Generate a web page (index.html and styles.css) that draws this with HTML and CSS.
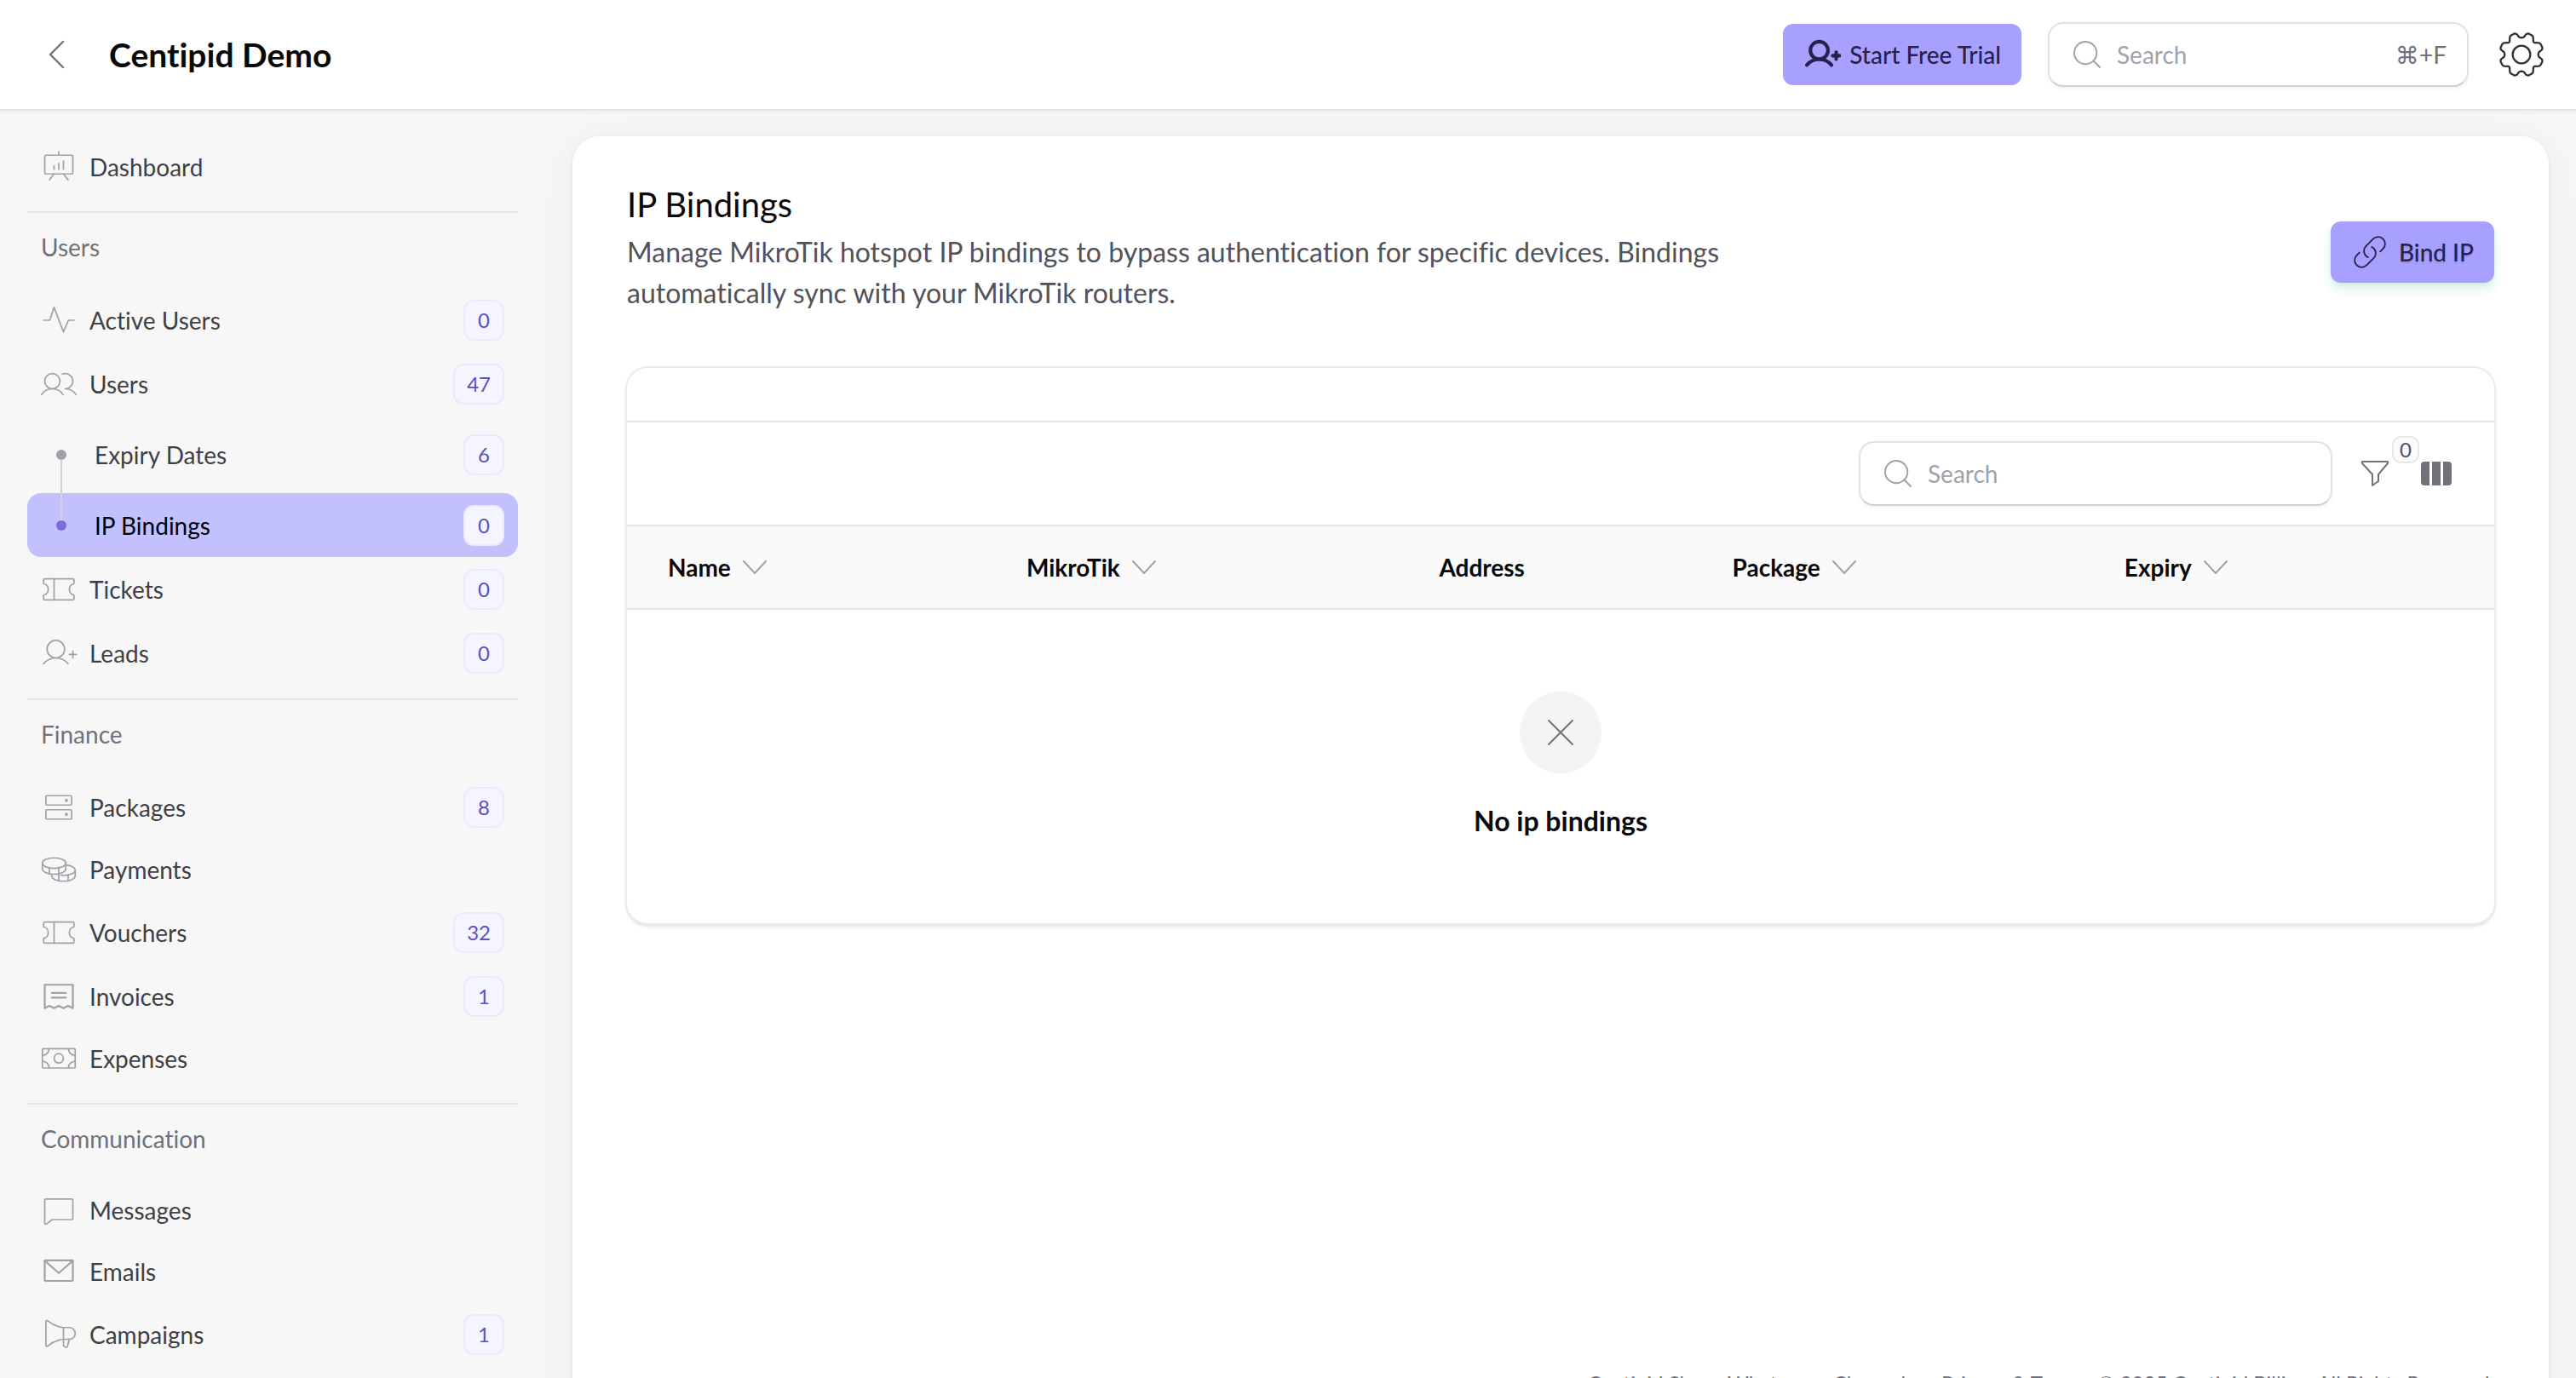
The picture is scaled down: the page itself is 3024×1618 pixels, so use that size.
FILE: index.html
```html
<!DOCTYPE html>
<html lang="en">

<head>
    <meta charset="UTF-8">
    <meta name="viewport" content="width=device-width, initial-scale=1.0">
    <title>IP Bindings - Centipid Demo</title>
    <link rel="stylesheet" href="styles.css">
</head>

<body>
    <!-- shared icons -->
    <svg class="sprite" aria-hidden="true">
        <symbol id="i-ticket" viewBox="0 0 256 256">
            <path d="M96,56V200"/>
            <path d="M24,167.2V192a8,8,0,0,0,8,8H224a8,8,0,0,0,8-8V167.2a40,40,0,0,1,0-78.4V64a8,8,0,0,0-8-8H32a8,8,0,0,0-8,8V88.8a40,40,0,0,1,0,78.4Z"/>
        </symbol>
        <symbol id="i-user-plus" viewBox="0 0 256 256">
            <circle cx="108" cy="100" r="60"/>
            <path d="M24,200c20.55-24.45,49.56-40,84-40s63.45,15.55,84,40M200,136h48M224,112v48"/>
        </symbol>
        <symbol id="i-search" viewBox="0 0 256 256">
            <circle cx="116" cy="116" r="84"/>
            <path d="M175.4,175.4L224,224"/>
        </symbol>
        <symbol id="i-down" viewBox="0 0 28 16">
            <path d="M1,1L14,15L27,1"/>
        </symbol>
    </svg>

    <header class="topbar">
        <button class="back" aria-label="Back">
            <svg class="icon icon-light" viewBox="0 0 256 256"><path d="M160,208L80,128L160,48"/></svg>
        </button>
        <a class="brand" href="#">Centipid Demo</a>
        <div class="topbar-right">
            <button class="btn">
                <svg class="icon icon-bold"><use href="#i-user-plus"/></svg>
                Start Free Trial
            </button>
            <label class="search search-global">
                <svg class="icon icon-light"><use href="#i-search"/></svg>
                <input type="search" placeholder="Search" aria-label="Global search">
                <kbd>⌘+F</kbd>
            </label>
            <button class="gear" aria-label="Settings">
                <svg viewBox="-78 -78 156 156">
                    <circle r="31"/>
                    <path d="M0,-59L8,-61L17,-72L24,-74L39,-66L41,-60L42,-45L45,-42L60,-41L66,-39L74,-24L72,-17L61,-8L59,0L61,8L72,17L74,24L66,39L60,41L45,42L42,45L41,60L39,66L24,74L17,72L8,61L0,59L-8,61L-17,72L-24,74L-39,66L-41,60L-42,45L-45,42L-60,41L-66,39L-74,24L-72,17L-61,8L-59,0L-61,-8L-72,-17L-74,-24L-66,-39L-60,-41L-45,-42L-42,-45L-41,-60L-39,-66L-24,-74L-17,-72L-8,-61Z"/>
                </svg>
            </button>
        </div>
    </header>

    <div class="layout">
        <nav class="sidebar">
            <a class="item" href="#">
                <svg class="icon" viewBox="0 0 256 256"><rect x="32" y="48" width="192" height="128" rx="8"/><path d="M128,48V24M160,176l32,40M96,176L64,216M96,120v24M128,104v40M160,88v56"/></svg>
                <span>Dashboard</span>
            </a>

            <section class="group">
                <h2>Users</h2>
                <a class="item" href="#">
                    <svg class="icon" viewBox="0 0 256 256"><path d="M24,128H66L96,40L160,208L194,128H232"/></svg>
                    <span>Active Users</span><b class="badge">0</b>
                </a>
                <a class="item" href="#">
                    <svg class="icon" viewBox="0 0 256 256"><circle cx="84" cy="108" r="52"/><path d="M10.23,200a88,88,0,0,1,147.54,0M172,160a87.93,87.93,0,0,1,73.77,40M152.69,59.7A52,52,0,1,1,172,160"/></svg>
                    <span>Users</span><b class="badge">47</b>
                </a>
                <div class="subitems">
                    <a class="item" href="#"><i class="dot"></i><span>Expiry Dates</span><b class="badge">6</b></a>
                    <a class="item active" href="#"><i class="dot"></i><span>IP Bindings</span><b class="badge">0</b></a>
                </div>
                <a class="item" href="#">
                    <svg class="icon"><use href="#i-ticket"/></svg>
                    <span>Tickets</span><b class="badge">0</b>
                </a>
                <a class="item" href="#">
                    <svg class="icon"><use href="#i-user-plus"/></svg>
                    <span>Leads</span><b class="badge">0</b>
                </a>
            </section>

            <section class="group">
                <h2>Finance</h2>
                <a class="item" href="#">
                    <svg class="icon" viewBox="0 0 256 256"><rect x="40" y="144" width="176" height="64" rx="8"/><rect x="40" y="48" width="176" height="64" rx="8"/><circle class="fill" cx="180" cy="80" r="6"/><circle class="fill" cx="180" cy="176" r="6"/></svg>
                    <span>Packages</span><b class="badge">8</b>
                </a>
                <a class="item" href="#">
                    <svg class="icon" viewBox="0 0 256 256"><ellipse cx="96" cy="84" rx="80" ry="36"/><path d="M16,84v40c0,19.88,35.82,36,80,36s80-16.12,80-36V84M64,117v40M128,117v40M176,96.7c36.52,3.34,64,17.86,64,35.3v40c0,19.88-35.82,36-80,36s-80-16.12-80-36V159.3M240,132c0,19.88-35.82,36-80,36c-6,0-12-.3-17.5-.9M192,165v40M128,157v48"/></svg>
                    <span>Payments</span>
                </a>
                <a class="item" href="#">
                    <svg class="icon"><use href="#i-ticket"/></svg>
                    <span>Vouchers</span><b class="badge">32</b>
                </a>
                <a class="item" href="#">
                    <svg class="icon icon-light" viewBox="0 0 256 256"><path d="M32,208V48H224V208l-32-16-32,16-32-16L96,208,64,192ZM80,104h96M80,136h96"/></svg>
                    <span>Invoices</span><b class="badge">1</b>
                </a>
                <a class="item" href="#">
                    <svg class="icon" viewBox="0 0 256 256"><rect x="16" y="60" width="224" height="132" rx="6"/><circle cx="128" cy="126" r="32"/><path d="M62,60A46,46,0,0,1,16,106M194,60A46,46,0,0,0,240,106M16,146A46,46,0,0,1,62,192M240,146A46,46,0,0,0,194,192"/></svg>
                    <span>Expenses</span>
                </a>
            </section>

            <section class="group">
                <h2>Communication</h2>
                <a class="item" href="#">
                    <svg class="icon" viewBox="0 0 256 256"><path d="M40,52H216a8,8,0,0,1,8,8V184a8,8,0,0,1-8,8H83L45,222A8,8,0,0,1,32,216V60a8,8,0,0,1,8-8Z"/></svg>
                    <span>Messages</span>
                </a>
                <a class="item" href="#">
                    <svg class="icon icon-light" viewBox="0 0 256 256"><rect x="32" y="52" width="192" height="140" rx="6"/><path d="M224,54L128,138L32,54"/></svg>
                    <span>Emails</span>
                </a>
                <a class="item" href="#">
                    <svg class="icon" viewBox="0 0 256 256"><path d="M160,80V200.67a8,8,0,0,0,3.56,6.65l11,7.33a8,8,0,0,0,12.2-4.72L200,160M40,200a8,8,0,0,0,13.15,6.12C105.55,162.16,160,160,160,160h40a40,40,0,0,0,0-80H160S105.55,77.84,53.15,33.89A8,8,0,0,0,40,40Z"/></svg>
                    <span>Campaigns</span><b class="badge">1</b>
                </a>
            </section>
        </nav>

        <main class="panel">
            <div class="page-head">
                <div>
                    <h1>IP Bindings</h1>
                    <p>Manage MikroTik hotspot IP bindings to bypass authentication for specific devices. Bindings automatically sync with your MikroTik routers.</p>
                </div>
                <button class="btn btn-bind">
                    <svg class="icon" viewBox="0 0 24 24"><path d="M13.19 8.688a4.5 4.5 0 0 1 1.242 7.244l-4.5 4.5a4.5 4.5 0 0 1-6.364-6.364l1.757-1.757m13.35-.622 1.757-1.757a4.5 4.5 0 0 0-6.364-6.364l-4.5 4.5a4.5 4.5 0 0 0 1.242 7.244"/></svg>
                    Bind IP
                </button>
            </div>

            <div class="card">
                <div class="card-head"></div>
                <div class="toolbar">
                    <label class="search search-table">
                        <svg class="icon icon-light"><use href="#i-search"/></svg>
                        <input type="search" placeholder="Search" aria-label="Search table">
                    </label>
                    <button class="tool filter" aria-label="Filter">
                        <svg viewBox="0 0 32 32"><path d="M1,2H31V4L20,17V25L13,30V17L1,4Z"/></svg>
                        <span class="count">0</span>
                    </button>
                    <button class="tool columns" aria-label="Columns">
                        <svg viewBox="0 0 36 28"><path d="M4,0H10V28H4a4,4,0,0,1-4-4V4a4,4,0,0,1,4-4ZM13,0H23V28H13ZM26,0H32a4,4,0,0,1,4,4V24a4,4,0,0,1-4,4H26Z"/></svg>
                    </button>
                </div>
                <table>
                    <colgroup>
                        <col class="c-name"><col class="c-mikrotik"><col class="c-address"><col class="c-package"><col>
                    </colgroup>
                    <thead>
                        <tr>
                            <th><button>Name <svg><use href="#i-down"/></svg></button></th>
                            <th><button>MikroTik <svg><use href="#i-down"/></svg></button></th>
                            <th>Address</th>
                            <th><button>Package <svg><use href="#i-down"/></svg></button></th>
                            <th><button>Expiry <svg><use href="#i-down"/></svg></button></th>
                        </tr>
                    </thead>
                </table>
                <div class="empty">
                    <div class="empty-icon">
                        <svg viewBox="0 0 32 32"><path d="M2,2L30,30M30,2L2,30"/></svg>
                    </div>
                    <h3>No ip bindings</h3>
                </div>
            </div>

            <footer>
                <a href="#">Centipid Shop</a>
                <a href="#">Whatsapp</a>
                <a href="#">Changelog</a>
                <a href="#">Privacy &amp; Terms</a>
                <span>© 2025 Centipid Billing. All Rights Reserved.</span>
            </footer>
        </main>
    </div>
</body>

</html>
```
FILE: styles.css
```css
* {
    box-sizing: border-box;
}

body {
    font-family: Lato, "DejaVu Sans", sans-serif;
    font-size: 28px;
    line-height: 40px;
    font-variant-ligatures: none;
    color: #09090b;
    background-color: #f7f7f7;
    margin: 0;
    height: 100vh;
    display: flex;
    flex-direction: column;
    overflow: hidden;
}

a {
    color: inherit;
    text-decoration: none;
}

button,
input,
kbd {
    font: inherit;
    color: inherit;
    background: none;
    border: 0;
    padding: 0;
}

button {
    cursor: pointer;
}

h1,
h2,
h3,
p {
    margin: 0;
}

.sprite {
    position: absolute;
    width: 0;
    height: 0;
}

.icon {
    width: 44px;
    height: 44px;
    flex-shrink: 0;
    fill: none;
    stroke: currentColor;
    stroke-width: 10;
    stroke-linecap: round;
    stroke-linejoin: round;
}

.icon-light {
    stroke-width: 13;
}

.icon-bold {
    stroke-width: 24;
}

.icon .fill {
    fill: currentColor;
}

/* top bar */
.topbar {
    display: flex;
    align-items: center;
    flex-shrink: 0;
    height: 130px;
    padding: 0 38px 0 44px;
    background-color: #fff;
    border-bottom: 2px solid #e4e4e4;
    box-shadow: 0 2px 4px rgba(0, 0, 0, 0.04);
    z-index: 1;
}

.back {
    display: flex;
    color: #71717a;
}

.back .icon {
    width: 48px;
    height: 48px;
}

.brand {
    margin-left: 36px;
    font-size: 39px;
    font-weight: 700;
}

.topbar-right {
    display: flex;
    align-items: center;
    margin-left: auto;
}

.btn {
    display: flex;
    align-items: center;
    gap: 10px;
    height: 72px;
    padding: 0 24px;
    border-radius: 12px;
    background-color: #a7a0ff;
    color: #27214d;
    font-weight: 500;
}

.btn .icon {
    width: 44px;
    height: 44px;
}

.btn-bind {
    gap: 12px;
    box-shadow: 0 8px 14px rgba(16, 160, 120, 0.14), 0 2px 4px rgba(16, 160, 120, 0.1);
    text-shadow: 0 2px 2px rgba(0, 0, 0, 0.12);
}

.btn-bind .icon {
    stroke-width: 1;
}

.search {
    display: flex;
    align-items: center;
    height: 76px;
    padding: 0 24px;
    gap: 15px;
    background-color: #fff;
    border: 2px solid #e2e2e2;
    border-bottom-color: #d0d0d0;
    border-radius: 18px;
    box-shadow: 0 2px 4px rgba(0, 0, 0, 0.06);
    color: #a1a1aa;
}

.search .icon {
    width: 40px;
    height: 40px;
}

.search input {
    flex: 1;
    min-width: 0;
    outline: none;
}

.search input::placeholder {
    color: #a1a1aa;
    opacity: 1;
}

.search kbd {
    color: #71717a;
}

.search-global {
    width: 494px;
    margin: 0 36px 0 31px;
}

.gear {
    display: flex;
}

.gear svg {
    width: 52px;
    height: 52px;
    fill: none;
    stroke: #333;
    stroke-width: 7;
    stroke-linejoin: round;
}

.layout {
    display: flex;
    flex: 1;
    min-height: 0;
    padding: 30px 32px 0;
    gap: 64px;
    align-items: flex-start;
}

/* sidebar */
.sidebar {
    width: 576px;
    flex-shrink: 0;
}

.group {
    margin-top: 16px;
    border-top: 2px solid #e4e4e7;
}

.group h2 {
    padding: 20px 16px 28px;
    font-size: 28px;
    font-weight: 400;
    color: #71717a;
}

.item {
    display: flex;
    align-items: center;
    gap: 14px;
    min-height: 72px;
    padding: 0 16px 0 15px;
    border-radius: 16px;
    color: #3f3f46;
}

.item .icon {
    color: #a1a1aa;
}

.badge {
    min-width: 48px;
    height: 48px;
    margin: 14px 0 13px auto;
    padding: 0 14px;
    border: 2px solid #ebe8ff;
    border-radius: 12px;
    background-color: #f5f5ff;
    color: #5e50bf;
    font-size: 24px;
    font-weight: 400;
    line-height: 44px;
    text-align: center;
}

.subitems {
    display: grid;
    gap: 8px;
    padding-top: 8px;
}

.dot {
    position: relative;
    display: flex;
    justify-content: center;
    width: 50px;
}

.dot::before {
    content: "";
    width: 12px;
    height: 12px;
    border-radius: 50%;
    background-color: #a1a1aa;
    z-index: 1;
}

.active {
    background-color: #c3c0ff;
    color: #000;
}

.active .dot::before {
    background-color: #7a6bdf;
}

/* line up to the dot of the item above */
.active .dot::after {
    content: "";
    position: absolute;
    bottom: 12px;
    width: 2px;
    height: 71px;
    background-color: #d1d1d6;
}

/* page */
.panel {
    display: flex;
    flex-direction: column;
    flex: 1;
    min-width: 0;
    min-height: 100vh;
    padding: 56px 64px 134px;
    background-color: #fff;
    border-radius: 32px;
    box-shadow: 0 2px 6px rgba(0, 0, 0, 0.08), 0 8px 60px rgba(0, 0, 0, 0.05);
}

.page-head {
    display: flex;
    justify-content: space-between;
    align-items: center;
    min-height: 160px;
}

.page-head h1 {
    font-size: 40px;
    font-weight: 400;
    line-height: 48px;
}

.page-head p {
    max-width: 1344px;
    margin: 8px 0;
    font-size: 32px;
    line-height: 48px;
    color: #52525b;
}

.card {
    margin-top: 56px;
    border-radius: 24px;
    box-shadow: 0 0 0 2px #ebebeb, 0 3px 5px rgba(0, 0, 0, 0.16);
    overflow: hidden;
}

.card-head {
    height: 64px;
    border-bottom: 2px solid #e4e4e4;
}

.toolbar {
    display: flex;
    align-items: center;
    justify-content: flex-end;
    height: 122px;
    padding-right: 50px;
    border-bottom: 2px solid #e4e4e4;
}

.search-table {
    width: 556px;
    margin-right: 34px;
}

.tool {
    display: flex;
    position: relative;
    color: #71717a;
}

.filter {
    margin-right: 38px;
}

.filter svg {
    width: 32px;
    height: 32px;
    fill: none;
    stroke: currentColor;
    stroke-width: 2;
    stroke-linejoin: round;
}

.columns svg {
    width: 36px;
    height: 28px;
    fill: currentColor;
}

.count {
    position: absolute;
    left: 36px;
    bottom: 28px;
    min-width: 32px;
    border: 2px solid #e8e8e8;
    border-radius: 10px;
    background-color: #fafafa;
    color: #52525b;
    font-size: 24px;
    line-height: 28px;
}

table {
    width: 100%;
    table-layout: fixed;
    border-spacing: 0;
}

.c-name {
    width: 20.3%;
}

.c-mikrotik {
    width: 22.1%;
}

.c-address {
    width: 15.7%;
}

.c-package {
    width: 21%;
}

th {
    height: 98px;
    padding: 0 24px;
    background-color: #fafafa;
    border-bottom: 2px solid #e4e4e4;
    text-align: left;
    font-weight: 700;
}

th:first-child {
    padding-left: 48px;
}

th button {
    display: flex;
    align-items: center;
    gap: 14px;
}

th svg {
    width: 28px;
    height: 16px;
    fill: none;
    stroke: #a1a1aa;
    stroke-width: 2;
    stroke-linecap: round;
}

.empty {
    display: flex;
    flex-direction: column;
    align-items: center;
    gap: 32px;
    padding: 96px 48px;
}

.empty-icon {
    display: grid;
    place-items: center;
    width: 96px;
    height: 96px;
    border-radius: 50%;
    background-color: #f4f4f5;
}

.empty-icon svg {
    width: 32px;
    height: 32px;
    stroke: #71717a;
    stroke-width: 2;
    stroke-linecap: round;
}

.empty h3 {
    font-size: 32px;
    font-weight: 700;
    line-height: 48px;
}

footer {
    display: flex;
    justify-content: flex-end;
    gap: 16px;
    margin-top: auto;
    font-size: 24px;
    color: #71717a;
}
```
